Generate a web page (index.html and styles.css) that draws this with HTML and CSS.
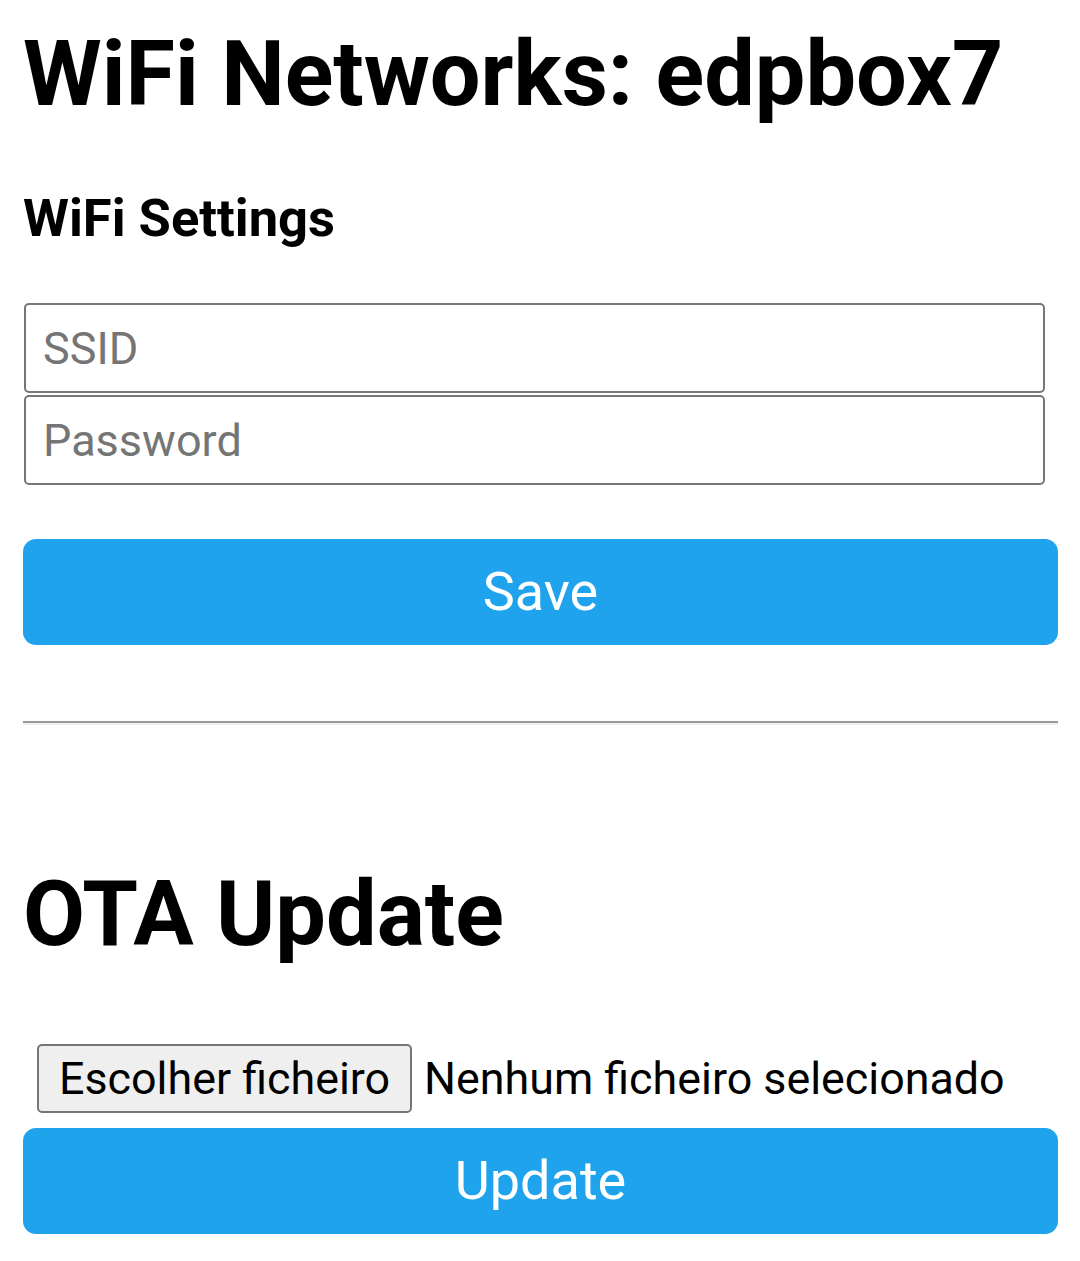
FILE: index.html
```html
<!DOCTYPE html>
<html lang="pt">
<head>
<meta charset="utf-8">
<title>WiFi Networks: edpbox7</title>
<link rel="stylesheet" href="styles.css">
</head>
<body>
<h1 class="title">WiFi Networks: edpbox7</h1>
<h2 class="subtitle">WiFi Settings</h2>
<form class="wifi-form">
  <input class="field" type="text" placeholder="SSID">
  <input class="field field-second" type="password" placeholder="Password">
  <button class="btn btn-save" type="button">Save</button>
</form>
<hr class="divider">
<h1 class="title title-ota">OTA Update</h1>
<div class="file-row">
  <span class="file-btn">Escolher ficheiro</span>
  <span class="file-name">Nenhum ficheiro selecionado</span>
</div>
<button class="btn btn-update" type="button">Update</button>
</body>
</html>
```

FILE: styles.css
```css
html, body {
  margin: 0;
  padding: 0;
  background: #ffffff;
}
body {
  padding: 25px 22px 0 23px;
  font-family: Roboto, "Noto Sans", Arial, sans-serif;
  color: #000;
}
.title {
  margin: 0;
  font-size: 90px;
  line-height: 100px;
  font-weight: 700;
}
.subtitle {
  margin: 62px 0 0 0;
  font-size: 52.5px;
  line-height: 62px;
  font-weight: 700;
}
.wifi-form {
  margin: 54px 0 0 0;
  display: flex;
  flex-direction: column;
}
.field {
  box-sizing: border-box;
  width: 1021px;
  height: 90px;
  margin: 0 0 0 1px;
  padding: 0 17px;
  border: 2px solid #767676;
  border-radius: 5px;
  font-family: Roboto, "Noto Sans", Arial, sans-serif;
  font-size: 45px;
  color: #000;
  background: #fff;
  outline: none;
}
.field::placeholder {
  color: #757575;
}
.field-second {
  margin-top: 2px;
}
.btn {
  display: block;
  box-sizing: border-box;
  width: 1035px;
  height: 106px;
  border: 0;
  border-radius: 13px;
  background-color: #1fa3ec;
  color: #fff;
  font-family: Roboto, "Noto Sans", Arial, sans-serif;
  font-size: 54px;
  line-height: 106px;
  padding: 0;
  margin: 0;
}
.btn-save {
  margin-top: 54px;
}
.divider {
  margin: 76px 0 0 0;
  width: 1035px;
  height: 0;
  border: 0;
  border-top: 2px solid #9a9a9a;
  border-bottom: 2px solid #efefef;
}
.title-ota {
  margin-top: 140px;
}
.file-row {
  margin: 79px 0 0 14px;
  display: flex;
  align-items: baseline;
  gap: 12px;
  font-size: 44.8px;
}
.file-btn {
  box-sizing: border-box;
  display: inline-flex;
  align-items: center;
  height: 69px;
  padding: 0 20px;
  background: #efefef;
  border: 2px solid #767676;
  border-radius: 5px;
  color: #000;
}
.file-name {
  color: #000;
}
.btn-update {
  margin-top: 15px;
}
```
